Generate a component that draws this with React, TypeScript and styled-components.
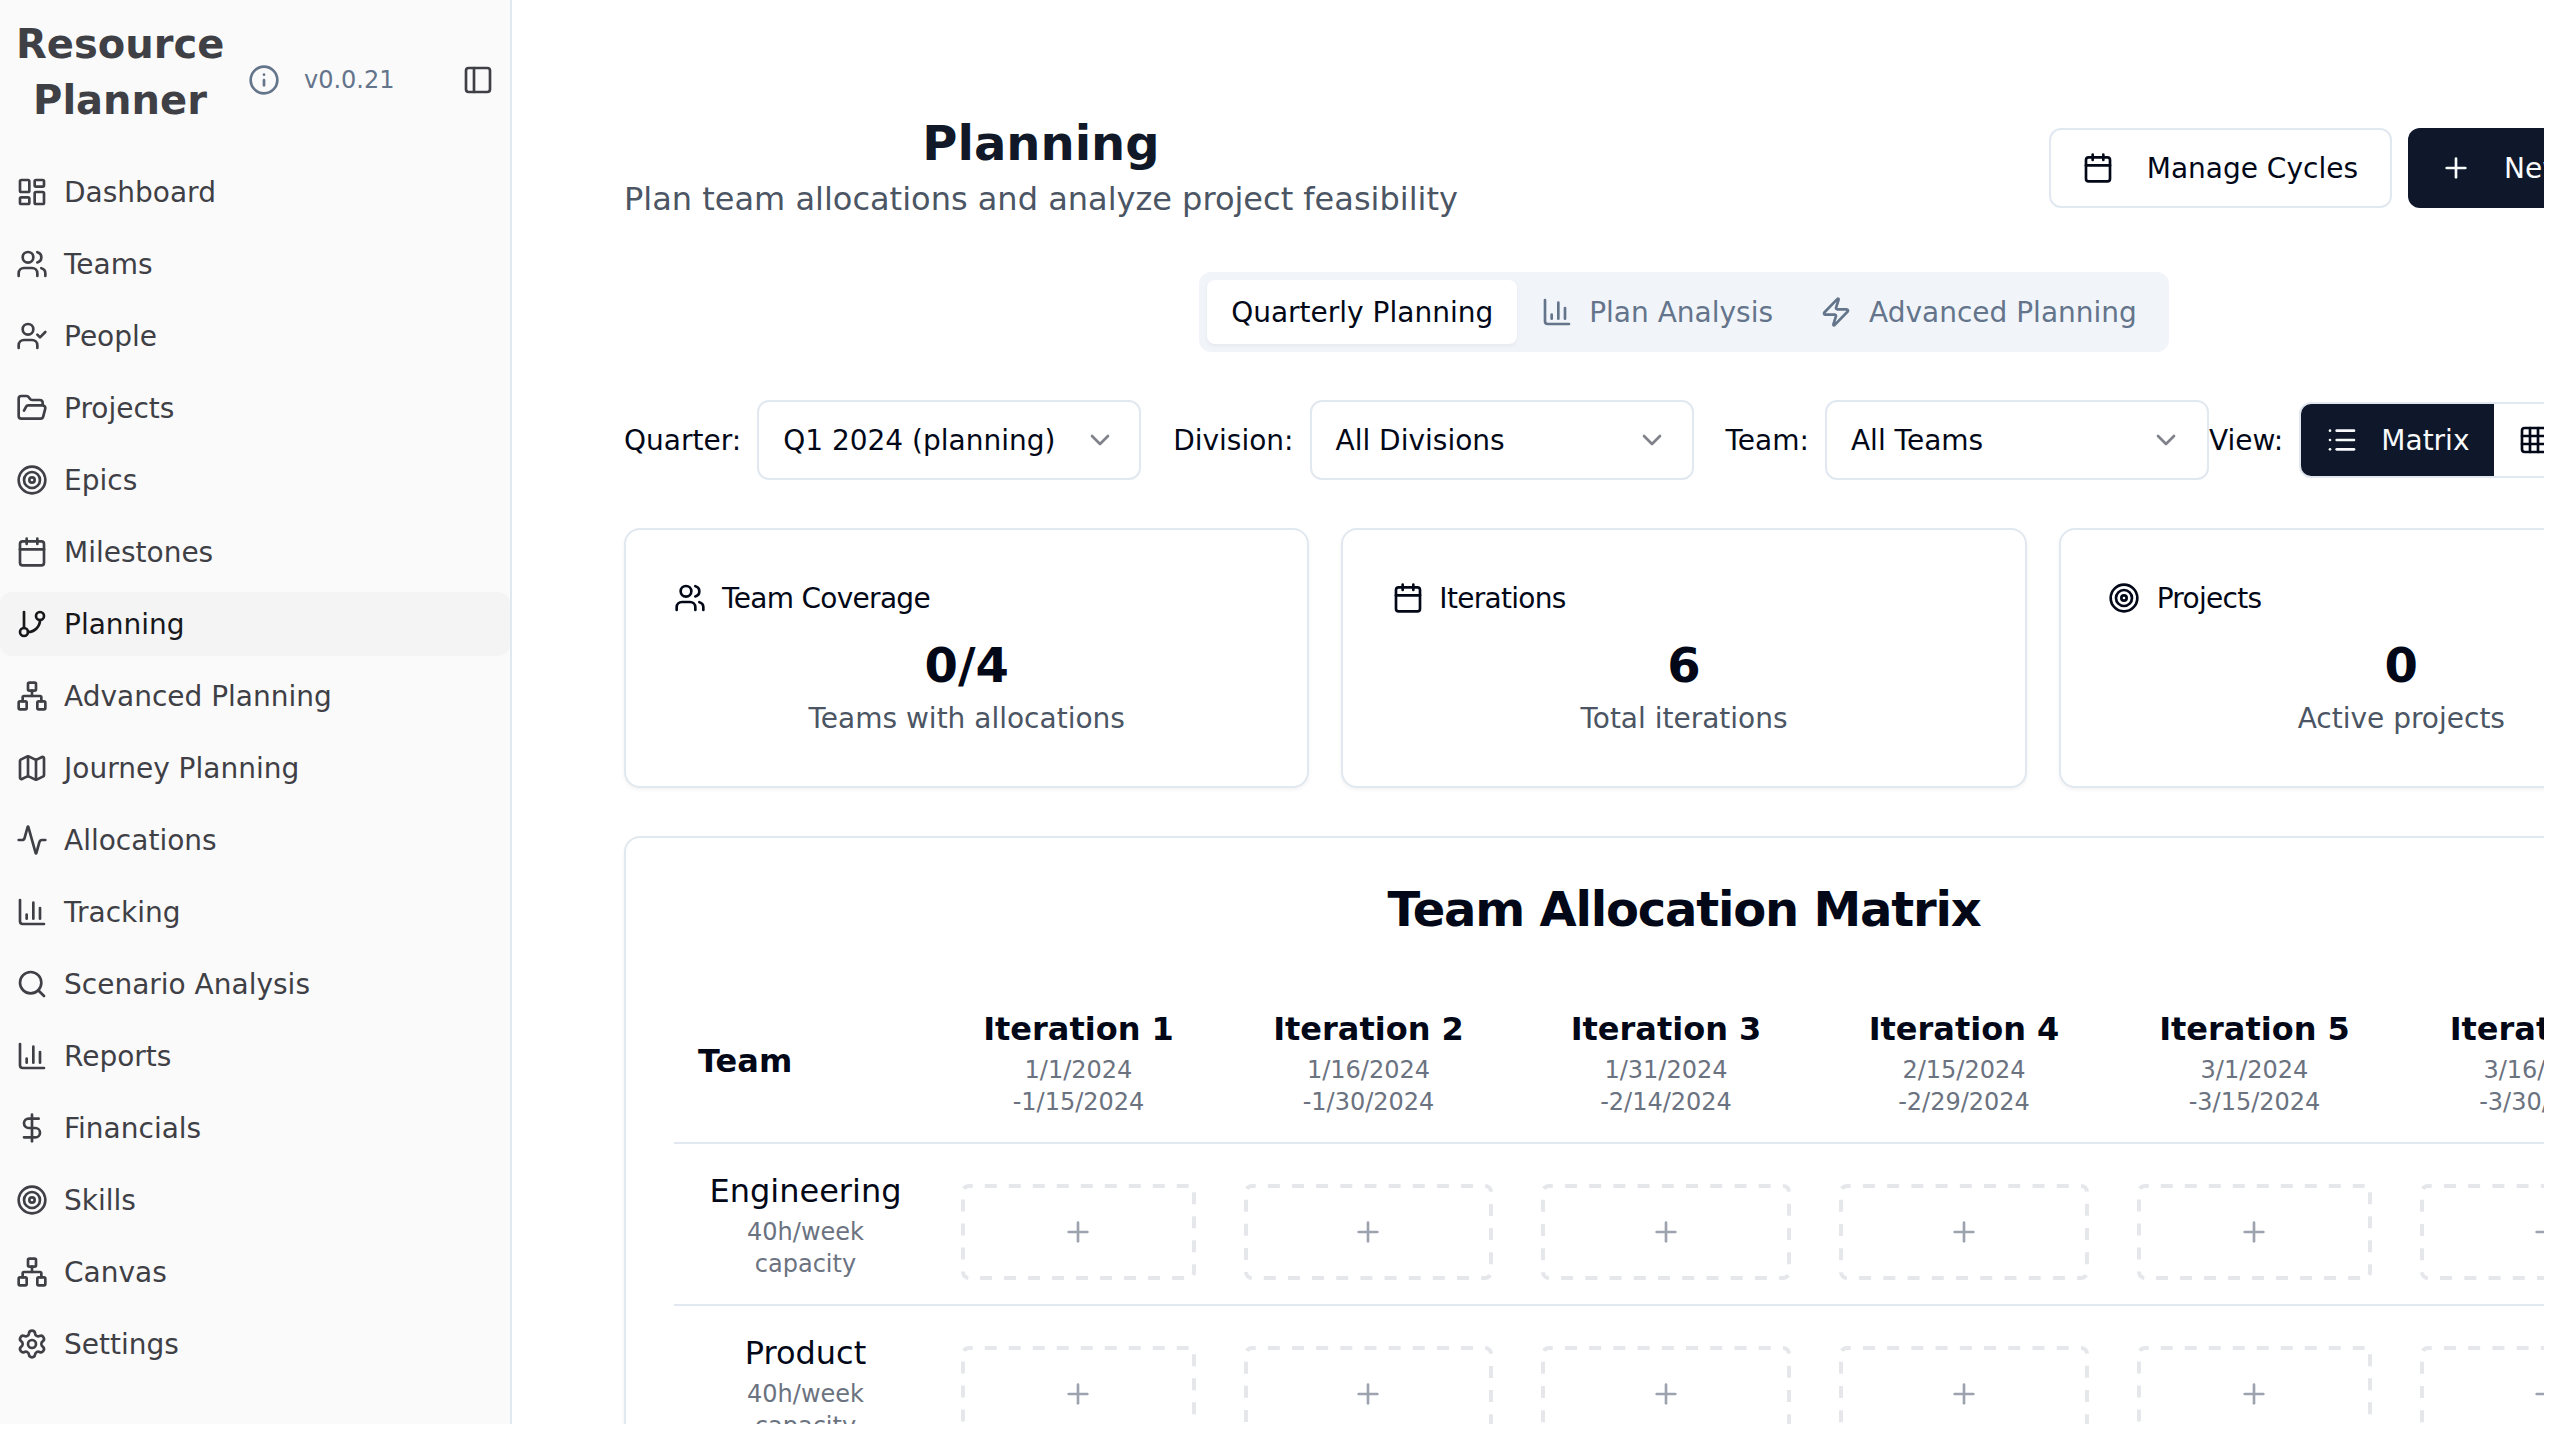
import React from 'react';
import styled, { createGlobalStyle, css } from 'styled-components';
import {
  Activity,
  Calendar,
  ChartColumn,
  ChevronDown,
  DollarSign,
  FolderOpen,
  GitBranch,
  Grid3x3,
  Info,
  LayoutDashboard,
  List,
  Map as MapIcon,
  Network,
  PanelLeft,
  Plus,
  Search,
  Settings,
  Target,
  UserCheck,
  Users,
  Zap,
  type LucideIcon,
} from 'lucide-react';

const color = {
  ink: '#020817',
  primary: '#0f172a',
  border: '#e2e8f0',
  muted: '#f1f5f9',
  mutedText: '#64748b',
  heading: '#111827',
  caption: '#4b5563',
  faint: '#6b7280',
  placeholder: '#9ca3af',
  dash: '#e5e7eb',
};

const GlobalStyle = createGlobalStyle`
  *, *::before, *::after { box-sizing: border-box; }
  body {
    margin: 0;
    background: #fff;
    color: ${color.ink};
    font-family: 'DejaVu Sans', sans-serif;
    font-size: 32px;
    line-height: 48px;
  }
  h1, h2, h3, p { margin: 0; }
  button { font: inherit; color: inherit; cursor: pointer; }
  svg { flex-shrink: 0; display: block; }
`;

const Shell = styled.div`
  display: flex;
  width: 2544px;
  height: 1424px;
  overflow: hidden;
`;

const Label = styled.span`
  display: block;
  margin: 1px 0 -1px;
`;

const Glyph = styled.span<{ $shift?: number }>`
  display: block;
  flex-shrink: 0;
  margin-left: ${(p) => p.$shift ?? 0}px;
  margin-right: ${(p) => -(p.$shift ?? 0)}px;
`;

const Sidebar = styled.aside`
  flex: 0 0 512px;
  background: #fafafa;
  border-right: 2px solid ${color.border};
  color: #3f3f46;
`;

const SidebarHeader = styled.div`
  display: flex;
  align-items: center;
  height: 160px;
  padding: 16px;
  gap: 24px;
`;

const Brand = styled.h2`
  width: 208px;
  margin-bottom: 16px;
  font-size: 40px;
  font-weight: 700;
  line-height: 56px;
  text-align: center;
`;

const Version = styled.div`
  display: flex;
  align-items: center;
  gap: 24px;
  font-size: 24px;
  line-height: 32px;
  color: ${color.mutedText};
`;

const CollapseButton = styled.button`
  margin-left: auto;
  padding: 0;
  border: 0;
  background: none;
`;

const Nav = styled.nav`
  display: flex;
  flex-direction: column;
  gap: 8px;
`;

const NavItem = styled.a<{ $active?: boolean }>`
  display: flex;
  align-items: center;
  gap: 16px;
  height: 64px;
  padding: 0 16px;
  border-radius: 12px;
  font-size: 28px;
  line-height: 40px;
  ${(p) => p.$active && css`
    background: #f4f4f5;
    color: #18181b;
  `}
`;

const Main = styled.main`
  display: flex;
  flex: 0 0 2120px;
  flex-direction: column;
  gap: 48px;
  margin: 112px 0 0 112px;

  > * { flex-shrink: 0; }
`;

const PageHeader = styled.header`
  display: flex;
  align-items: center;
  justify-content: space-between;
`;

const Heading = styled.div`
  margin: -1px 0 1px;
  text-align: center;
`;

const Title = styled.h1`
  font-size: 48px;
  font-weight: 700;
  line-height: 64px;
  color: ${color.heading};
`;

const Subtitle = styled.p`
  color: ${color.caption};
`;

const Actions = styled.div`
  display: flex;
  gap: 16px;
`;

const ActionButton = styled.button<{ $primary?: boolean }>`
  display: flex;
  align-items: center;
  gap: 32px;
  height: 80px;
  padding: 0 32px;
  border: ${(p) => (p.$primary ? '0' : `2px solid ${color.border}`)};
  border-radius: 12px;
  background: ${(p) => (p.$primary ? color.primary : '#fff')};
  color: ${(p) => (p.$primary ? '#f8fafc' : color.ink)};
  font-size: 28px;
  line-height: 40px;
  white-space: nowrap;
`;

const Tabs = styled.div`
  display: flex;
  align-self: center;
  height: 80px;
  padding: 8px;
  border-radius: 12px;
  background: ${color.muted};
`;

const Tab = styled.button<{ $active?: boolean }>`
  display: flex;
  align-items: center;
  gap: 16px;
  padding: 0 24px;
  border: 0;
  border-radius: 8px;
  background: ${(p) => (p.$active ? '#fff' : 'transparent')};
  box-shadow: ${(p) => (p.$active ? '0 2px 4px rgba(0, 0, 0, 0.05)' : 'none')};
  color: ${(p) => (p.$active ? color.ink : color.mutedText)};
  font-size: 28px;
  line-height: 40px;
  white-space: nowrap;
`;

const Toolbar = styled.div`
  display: flex;
  align-items: center;
  height: 80px;
  font-size: 28px;
  line-height: 40px;
  white-space: nowrap;
`;

const Filters = styled.div`
  display: flex;
  gap: 32px;
`;

const Field = styled.div`
  display: flex;
  align-items: center;
  gap: 16px;
`;

const SelectBox = styled.div`
  display: flex;
  align-items: center;
  justify-content: space-between;
  width: 384px;
  height: 80px;
  padding: 0 24px;
  border: 2px solid ${color.border};
  border-radius: 12px;

  svg { opacity: 0.5; }
`;

const ViewGroup = styled.div`
  display: flex;
  height: 76px;
  overflow: hidden;
  border: 2px solid ${color.border};
  border-radius: 12px;
`;

const ViewButton = styled.button<{ $active?: boolean }>`
  display: flex;
  align-items: center;
  gap: 24px;
  padding: 0 25px 0 24px;
  border: 0;
  background: ${(p) => (p.$active ? color.primary : 'transparent')};
  color: ${(p) => (p.$active ? '#f8fafc' : color.ink)};
`;

const Stats = styled.div`
  display: grid;
  grid-template-columns: repeat(3, 1fr);
  gap: 32px;
`;

const Card = styled.section`
  padding: 48px;
  border: 2px solid ${color.border};
  border-radius: 16px;
  background: #fff;
  box-shadow: 0 2px 4px rgba(0, 0, 0, 0.05);
  text-align: center;
`;

const StatTitle = styled.h3`
  display: flex;
  align-items: center;
  gap: 16px;
  margin-bottom: 16px;
  font-size: 28px;
  font-weight: 500;
  line-height: 40px;
  letter-spacing: -0.025em;
`;

const StatValue = styled.div`
  margin-top: -1px;
  font-size: 48px;
  font-weight: 700;
  line-height: 64px;
`;

const StatCaption = styled.div`
  margin: 2px 0 -1px;
  font-size: 28px;
  line-height: 40px;
  color: ${color.caption};
`;

const MatrixTitle = styled.h3`
  margin: -1px 0 49px;
  font-size: 48px;
  font-weight: 700;
  line-height: 48px;
  letter-spacing: -0.025em;
`;

const Matrix = styled.table`
  width: 2020px;
  table-layout: fixed;
  border-collapse: separate;
  border-spacing: 0;
  text-align: center;
`;

const HeadCell = styled.th<{ $left?: boolean }>`
  height: 162px;
  padding: 24px;
  border-bottom: 2px solid ${color.border};
  font-weight: 700;
  text-align: ${(p) => (p.$left ? 'left' : 'center')};
  white-space: nowrap;
`;

const Cell = styled.td`
  height: 162px;
  padding: 24px;
  border-bottom: 2px solid ${color.border};
  vertical-align: top;
`;

const Name = styled.div`
  margin: -1px 0 1px;
`;

const Small = styled.div`
  font-size: 24px;
  font-weight: 400;
  line-height: 32px;
  color: ${color.faint};
`;

const Slot = styled.div`
  position: relative;
  display: flex;
  align-items: center;
  justify-content: center;
  height: 96px;
  margin-top: 16px;
  overflow: hidden;
  border-radius: 8px;
  color: ${color.placeholder};
`;

const DashedOutline = styled.svg`
  position: absolute;
  inset: 0;
  width: 100%;
  height: 100%;
  fill: none;
  stroke: ${color.dash};
  stroke-width: 8px;
`;

/* Dashes are 12px long; the gap is stretched so that they close evenly round the outline. */
function dashPattern(width: number) {
  const radius = 8;
  const perimeter = 2 * (width + 96) - 8 * radius + 2 * Math.PI * radius;
  const count = Math.round(perimeter / 24);
  return `12 ${(perimeter / count - 12).toFixed(3)}`;
}

function EmptySlot({ width, shift }: { width: number; shift: number }) {
  return (
    <Slot>
      <DashedOutline>
        <rect width="100%" height="100%" rx={8} strokeDasharray={dashPattern(width)} strokeDashoffset={8.3} />
      </DashedOutline>
      <Glyph $shift={shift}>
        <Plus size={32} />
      </Glyph>
    </Slot>
  );
}

const navItems: { label: string; icon: LucideIcon; active?: boolean }[] = [
  { label: 'Dashboard', icon: LayoutDashboard },
  { label: 'Teams', icon: Users },
  { label: 'People', icon: UserCheck },
  { label: 'Projects', icon: FolderOpen },
  { label: 'Epics', icon: Target },
  { label: 'Milestones', icon: Calendar },
  { label: 'Planning', icon: GitBranch, active: true },
  { label: 'Advanced Planning', icon: Network },
  { label: 'Journey Planning', icon: MapIcon },
  { label: 'Allocations', icon: Activity },
  { label: 'Tracking', icon: ChartColumn },
  { label: 'Scenario Analysis', icon: Search },
  { label: 'Reports', icon: ChartColumn },
  { label: 'Financials', icon: DollarSign },
  { label: 'Skills', icon: Target },
  { label: 'Canvas', icon: Network },
  { label: 'Settings', icon: Settings },
];

const filters = [
  { label: 'Quarter:', value: 'Q1 2024 (planning)', shift: 1 },
  { label: 'Division:', value: 'All Divisions', shift: 0 },
  { label: 'Team:', value: 'All Teams', shift: -1 },
];

const stats: { title: string; value: string; caption: string; icon: LucideIcon; shift: number }[] = [
  { title: 'Team Coverage', value: '0/4', caption: 'Teams with allocations', icon: Users, shift: 0 },
  { title: 'Iterations', value: '6', caption: 'Total iterations', icon: Calendar, shift: 1 },
  { title: 'Projects', value: '0', caption: 'Active projects', icon: Target, shift: -1 },
];

const iterations = [
  { from: '1/1/2024', to: '1/15/2024', width: 283, shift: -1 },
  { from: '1/16/2024', to: '1/30/2024', width: 297, shift: -1 },
  { from: '1/31/2024', to: '2/14/2024', width: 298, shift: 0 },
  { from: '2/15/2024', to: '2/29/2024', width: 298, shift: 0 },
  { from: '3/1/2024', to: '3/15/2024', width: 283, shift: -1 },
  { from: '3/16/2024', to: '3/30/2024', width: 298, shift: 1 },
];

const teams = ['Engineering', 'Product'];

export default function App() {
  return (
    <>
      <GlobalStyle />
      <Shell>
        <Sidebar>
          <SidebarHeader>
            <Brand>Resource Planner</Brand>
            <Version>
              <Info size={32} />
              <span>v0.0.21</span>
            </Version>
            <CollapseButton aria-label="Toggle sidebar">
              <PanelLeft size={32} />
            </CollapseButton>
          </SidebarHeader>
          <Nav>
            {navItems.map(({ label, icon: Icon, active }) => (
              <NavItem key={label} $active={active}>
                <Icon size={32} />
                <Label>{label}</Label>
              </NavItem>
            ))}
          </Nav>
        </Sidebar>

        <Main>
          <PageHeader>
            <Heading>
              <Title>Planning</Title>
              <Subtitle>Plan team allocations and analyze project feasibility</Subtitle>
            </Heading>
            <Actions>
              <ActionButton>
                <Glyph $shift={-1}>
                  <Calendar size={32} />
                </Glyph>
                <Label>Manage Cycles</Label>
              </ActionButton>
              <ActionButton $primary>
                <Plus size={32} />
                <Label>New Allocation</Label>
              </ActionButton>
            </Actions>
          </PageHeader>

          <Tabs>
            <Tab $active>
              <Label>Quarterly Planning</Label>
            </Tab>
            <Tab>
              <ChartColumn size={32} />
              <Label>Plan Analysis</Label>
            </Tab>
            <Tab>
              <Glyph $shift={-1}>
                <Zap size={32} />
              </Glyph>
              <Label>Advanced Planning</Label>
            </Tab>
          </Tabs>

          <Toolbar>
            <Filters>
              {filters.map((f) => (
                <Field key={f.label}>
                  <Label>{f.label}</Label>
                  <SelectBox>
                    <Label>{f.value}</Label>
                    <Glyph $shift={f.shift}>
                      <ChevronDown size={32} />
                    </Glyph>
                  </SelectBox>
                </Field>
              ))}
            </Filters>
            <Field>
              <Label>View:</Label>
              <ViewGroup>
                <ViewButton $active>
                  <Glyph $shift={1}>
                    <List size={32} />
                  </Glyph>
                  <Label>Matrix</Label>
                </ViewButton>
                <ViewButton aria-label="Grid">
                  <Grid3x3 size={32} />
                </ViewButton>
              </ViewGroup>
            </Field>
          </Toolbar>

          <Stats>
            {stats.map(({ title, value, caption, icon: Icon, shift }) => (
              <Card key={title}>
                <StatTitle>
                  <Glyph $shift={shift}>
                    <Icon size={32} />
                  </Glyph>
                  <Label>{title}</Label>
                </StatTitle>
                <StatValue>{value}</StatValue>
                <StatCaption>{caption}</StatCaption>
              </Card>
            ))}
          </Stats>

          <Card>
            <MatrixTitle>Team Allocation Matrix</MatrixTitle>
            <Matrix>
              <colgroup>
                <col width={263} />
                {iterations.map((it) => (
                  <col key={it.from} width={it.width} />
                ))}
              </colgroup>
              <thead>
                <tr>
                  <HeadCell $left>
                    <Name>Team</Name>
                  </HeadCell>
                  {iterations.map((it, i) => (
                    <HeadCell key={it.from}>
                      <Name>Iteration {i + 1}</Name>
                      <Small>{it.from}</Small>
                      <Small>-{it.to}</Small>
                    </HeadCell>
                  ))}
                </tr>
              </thead>
              <tbody>
                {teams.map((team) => (
                  <tr key={team}>
                    <Cell>
                      <Name>{team}</Name>
                      <Small>40h/week</Small>
                      <Small>capacity</Small>
                    </Cell>
                    {iterations.map((it) => (
                      <Cell key={it.from}>
                        <EmptySlot width={it.width - 48} shift={it.shift} />
                      </Cell>
                    ))}
                  </tr>
                ))}
              </tbody>
            </Matrix>
          </Card>
        </Main>
      </Shell>
    </>
  );
}
